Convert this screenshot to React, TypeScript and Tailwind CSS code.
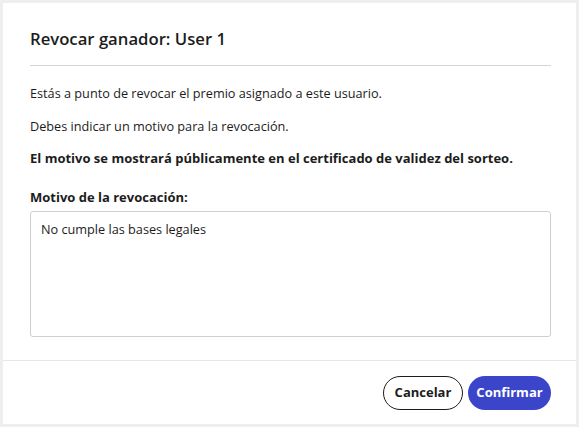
export default function App() {
    return (
        <div
            className="h-screen w-full bg-[#eeeeee] p-[3px]"
            style={{ fontFamily: "'Open Sans', Lato, sans-serif" }}
        >
            <div className="flex h-full flex-col bg-white text-[#1c1c1c]">
                <div className="pl-[27px] pr-[25px]">
                    <h2 className="border-b border-[#d4d4d4] pt-[24px] pb-[14px] text-[16.7px] leading-[24px] font-semibold">
                        Revocar ganador: User 1
                    </h2>
                </div>

                <div className="flex flex-col pl-[27px] pr-[25px] pt-[17px] text-[12.7px] leading-[20px]">
                    <p>Estás a punto de revocar el premio asignado a este usuario.</p>
                    <p className="mt-[13px]">Debes indicar un motivo para la revocación.</p>
                    <p className="mt-[12px] text-[13px] font-bold">
                        El motivo se mostrará públicamente en el certificado de validez del sorteo.
                    </p>
                    <label className="mt-[19px] mb-[4px] text-[13px] font-bold">Motivo de la revocación:</label>
                    <textarea
                        className="h-[126px] w-full resize-none rounded-[3px] border border-[#cfcfcf] px-[10px] py-[7px] text-[12.7px] leading-[20px] outline-none"
                        defaultValue="No cumple las bases legales"
                    />
                </div>

                <div className="mt-[23px] flex justify-end gap-[5px] border-t border-[#e6e6e6] pt-[15px] pr-[25px]">
                    <button className="h-[34px] w-[80px] rounded-full border border-[#1c1c1c] bg-white text-[13px] font-bold">
                        Cancelar
                    </button>
                    <button className="h-[34px] w-[83px] rounded-full bg-[#3b45c9] text-[13px] font-bold text-white">
                        Confirmar
                    </button>
                </div>
            </div>
        </div>
    );
}
